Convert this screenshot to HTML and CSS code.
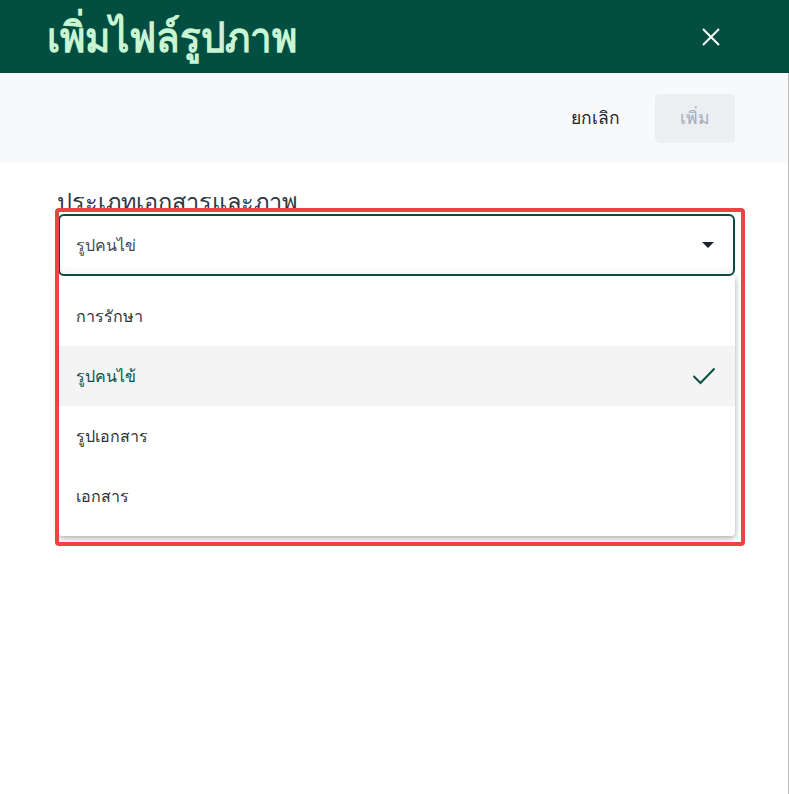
FILE: index.html
```html
<!DOCTYPE html>
<html lang="th">
<head>
<meta charset="utf-8">
<title>เพิ่มไฟล์รูปภาพ</title>
<link rel="stylesheet" href="styles.css">
</head>
<body>
<div class="dialog">
  <header class="header">
    <h1 class="title">เพิ่มไฟล์รูปภาพ</h1>
    <button class="close" aria-label="ปิด">
      <svg width="20" height="20" viewBox="0 0 20 20"><path d="M2 2 L18 18 M18 2 L2 18" stroke="#fff" stroke-width="2" fill="none"/></svg>
    </button>
  </header>
  <div class="toolbar">
    <button class="btn-text">ยกเลิก</button>
    <button class="btn-add" disabled>เพิ่ม</button>
  </div>
  <div class="content">
    <div class="label">ประเภทเอกสารและภาพ</div>
    <div class="field">
      <div class="select">
        <span class="select-value">รูปคนไข่</span>
        <svg class="caret" width="12" height="6" viewBox="0 0 12 6"><path d="M0 0 H12 L6 6 Z" fill="#1c2333"/></svg>
      </div>
      <ul class="listbox">
        <li class="option">การรักษา</li>
        <li class="option selected">รูปคนไข้
          <svg class="check" width="24" height="20" viewBox="0 0 24 20"><path d="M1.5 10 L8.5 17 L22.5 2.5" stroke="#0b4f42" stroke-width="2" fill="none"/></svg>
        </li>
        <li class="option">รูปเอกสาร</li>
        <li class="option">เอกสาร</li>
      </ul>
      <div class="highlight"></div>
    </div>
  </div>
</div>
</body>
</html>
```
FILE: styles.css
```css
* { box-sizing: border-box; }
html, body { margin: 0; padding: 0; background: #fff; }
body { font-family: "Noto Sans", "Liberation Sans", sans-serif; color: #2c333a; }
.dialog { width: 789px; height: 794px; display: flex; flex-direction: column; }
.header {
  height: 73px; background: #024f42; display: flex; align-items: center;
  justify-content: space-between; padding: 0 68px 0 47px;
}
.title { margin: 0; font-size: 38.5px; font-weight: 700; color: #c9f6d2; line-height: 1; transform: scaleY(1.08); }
.close { background: none; border: 0; padding: 0; width: 20px; height: 20px; cursor: pointer; display: block; }
.close svg { display: block; }
.toolbar {
  height: 90px; background: #f8f9fb; display: flex; align-items: center;
  justify-content: flex-end; padding: 0 53px 0 0; gap: 35px; border-right: 1px solid #bdbdbd;
}
.btn-text { background: none; border: 0; font: inherit; font-size: 17.5px; color: #1b2330; padding: 0; }
.btn-add {
  width: 80px; height: 49px; border: 0; border-radius: 5px; background: #eceef1;
  font: inherit; font-size: 17.5px; color: #a3acbc;
}
.content { flex: 1; border-right: 1px solid #bdbdbd; padding: 22px 53px 0 58px; }
.label { font-size: 23.5px; color: #2f3a45; height: 29px; line-height: 33px; overflow: visible; margin-left: -1px; }
.field { position: relative; }
.select {
  position: relative; z-index: 1; background: #fff;
  height: 62px; border: 2px solid #0b4c3f; border-radius: 6px;
  display: flex; align-items: center; justify-content: space-between;
  padding: 0 19px 0 16px; box-shadow: inset 0 -8px 8px -6px rgba(0,0,0,0.06);
}
.select-value { font-size: 16px; color: #434a55; }
.caret { display: block; }
.listbox {
  list-style: none; margin: 0; padding: 10px 0; background: #fff;
  border-radius: 0 0 4px 4px; box-shadow: 0 2px 6px rgba(0,0,0,0.35);
}
.option {
  height: 60px; display: flex; align-items: center; justify-content: space-between;
  padding: 0 19px 0 18px; font-size: 16px; color: #2c333a;
}
.option.selected { background: #f4f4f4; color: #0b5345; }
.check { display: block; }
.highlight {
  position: absolute; top: -6px; left: -3px; right: -10px; bottom: -10px;
  border: 4px solid #ef4242; border-radius: 4px; pointer-events: none; z-index: 2;
}
```
